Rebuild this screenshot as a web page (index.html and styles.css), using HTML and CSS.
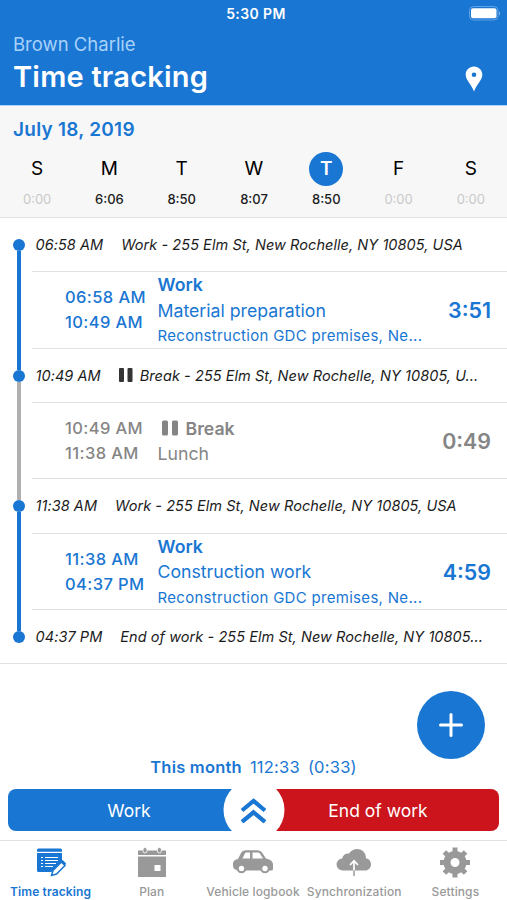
FILE: index.html
```html
<!DOCTYPE html>
<html lang="en">

<head>
    <meta charset="UTF-8">
    <meta name="viewport" content="width=device-width, initial-scale=1.0">
    <title>Time tracking</title>
    <link rel="stylesheet" href="styles.css">
</head>

<body>
    <div class="app">
        <header class="header">
            <div class="status-bar">
                <span></span>
                <span class="clock">5:30 PM</span>
                <svg class="battery" width="32" height="15" viewBox="0 0 32 15">
                    <rect x="0.5" y="0.5" width="28.5" height="13.5" rx="4" fill="none" stroke="#5fa3e6" />
                    <rect x="2" y="2.2" width="25.5" height="10" rx="2" fill="#fff" />
                    <path d="M30 5.2v4.4c1.6-.8 1.6-3.6 0-4.4z" fill="#7fb4ea" />
                </svg>
            </div>
            <div class="user-name"><span>Brown Charlie</span></div>
            <div class="title-row">
                <h1>Time tracking</h1>
                <svg class="pin" width="18" height="26" viewBox="0 0 18 26">
                    <path d="M9 0.4C4.2 0.4 0.7 4 0.7 8.6 0.7 14.5 6.5 18.5 9 25.6 11.5 18.5 17.3 14.5 17.3 8.6 17.3 4 13.8 0.4 9 0.4zM9 6.5a2.3 2.3 0 1 1 0 4.6 2.3 2.3 0 0 1 0-4.6z" fill="#fff" fill-rule="evenodd" />
                </svg>
            </div>
        </header>

        <!-- Week overview -->
        <section class="week">
            <h2><span>July 18, 2019</span></h2>
            <div class="days">
                <div class="day empty"><b>S</b><span>0:00</span></div>
                <div class="day"><b>M</b><span>6:06</span></div>
                <div class="day"><b>T</b><span>8:50</span></div>
                <div class="day"><b>W</b><span>8:07</span></div>
                <div class="day selected"><b>T</b><span>8:50</span></div>
                <div class="day empty"><b>F</b><span>0:00</span></div>
                <div class="day empty"><b>S</b><span>0:00</span></div>
            </div>
        </section>

        <!-- Timeline -->
        <main class="timeline">
            <div class="row event">
                <div class="rail first"><i class="line"></i><i class="dot"></i><i class="line"></i></div>
                <div class="content"><span class="time">06:58 AM</span><span class="place">Work - 255 Elm St, New Rochelle, NY 10805, USA</span></div>
            </div>
            <div class="row entry">
                <div class="rail"><i class="line"></i></div>
                <div class="content">
                    <div class="range"><span>06:58 AM</span><span>10:49 AM</span></div>
                    <div class="details">
                        <strong>Work</strong>
                        <span class="task">Material preparation</span>
                        <span class="project">Reconstruction GDC premises, Ne...</span>
                    </div>
                    <div class="duration">3:51</div>
                </div>
            </div>
            <div class="row event">
                <div class="rail"><i class="line"></i><i class="dot"></i><i class="line gray"></i></div>
                <div class="content">
                    <span class="time">10:49 AM</span>
                    <svg class="pause" width="14" height="14" viewBox="0 0 14 14" fill="#333"><rect width="5" height="14" rx="1" /><rect x="8.5" width="5" height="14" rx="1" /></svg>
                    <span class="place">Break - 255 Elm St, New Rochelle, NY 10805, U...</span>
                </div>
            </div>
            <div class="row entry break">
                <div class="rail"><i class="line gray"></i></div>
                <div class="content">
                    <div class="range"><span>10:49 AM</span><span>11:38 AM</span></div>
                    <div class="details">
                        <strong><svg class="pause" width="17" height="16" viewBox="0 0 17 16" fill="#858585"><rect y="0.5" width="6" height="15" rx="1.5" /><rect x="10" y="0.5" width="6" height="15" rx="1.5" /></svg>Break</strong>
                        <span class="task">Lunch</span>
                    </div>
                    <div class="duration">0:49</div>
                </div>
            </div>
            <div class="row event">
                <div class="rail"><i class="line gray"></i><i class="dot"></i><i class="line"></i></div>
                <div class="content"><span class="time">11:38 AM</span><span class="place">Work - 255 Elm St, New Rochelle, NY 10805, USA</span></div>
            </div>
            <div class="row entry">
                <div class="rail"><i class="line"></i></div>
                <div class="content">
                    <div class="range"><span>11:38 AM</span><span>04:37 PM</span></div>
                    <div class="details">
                        <strong>Work</strong>
                        <span class="task">Construction work</span>
                        <span class="project">Reconstruction GDC premises, Ne...</span>
                    </div>
                    <div class="duration">4:59</div>
                </div>
            </div>
            <div class="row event end">
                <div class="rail last"><i class="line"></i><i class="dot"></i><i class="line"></i></div>
                <div class="content"><span class="time">04:37 PM</span><span class="place">End of work - 255 Elm St, New Rochelle, NY 10805...</span></div>
            </div>
        </main>

        <section class="footer">
            <button class="add-btn">
                <svg width="24" height="24" viewBox="0 0 24 24" stroke="#fff" stroke-width="3" stroke-linecap="round"><path d="M12 1.5v21M1.5 12h21" /></svg>
            </button>
            <div class="summary"><b>This month</b><span>112:33</span><span>(0:33)</span></div>
            <div class="actions">
                <button class="work-btn">Work</button>
                <button class="end-btn">End of work</button>
                <button class="expand-btn">
                    <svg width="26" height="26" viewBox="0 0 26 26" fill="none" stroke="#1976d2" stroke-width="4.2"><path d="M1.5 13L13 3.4 24.5 13M1.5 24.4L13 14.8 24.5 24.4" /></svg>
                </button>
            </div>
        </section>

        <nav class="tabs">
            <a class="tab active">
                <svg width="36" height="32" viewBox="0 0 36 32">
                    <path d="M5.500 1.500h22a1.500 1.500 0 0 1 1.500 1.500v1.800H4V3a1.500 1.500 0 0 1 1.500-1.500zM4 6h25v8.500L18.500 25h-13A1.500 1.500 0 0 1 4 23.500z" fill="currentColor" />
                    <path d="M8 10.500h2M12 10.500h13M8 13.500h2M12 13.500h13M8 16.500h2M12 16.500h11M8 19.500h2M12 19.500h8" stroke="#fff" stroke-width="1.100" />
                    <path d="M18.500 28.500l1.500-5 8.500-8.500 3.500 3.500-8.500 8.500z" fill="#fff" stroke="currentColor" stroke-width="1.500" />
                    <path d="M27.500 14.500l2.200-1.500 3.500 3.500-1.700 2.200z" fill="currentColor" />
                </svg>
                <span>Time tracking</span>
            </a>
            <a class="tab">
                <svg width="30" height="32" viewBox="0 0 30 32">
                    <path d="M1 3.500h28v4.500H1zM1 9.500h28v20.500H1z" fill="currentColor" />
                    <path d="M17.500 18h6v6h-6z" fill="#fff" />
                    <rect x="6" y="0.500" width="4" height="5.500" rx="2" fill="currentColor" stroke="#fff" stroke-width="0.800" />
                    <rect x="20.400" y="0.500" width="4" height="5.500" rx="2" fill="currentColor" stroke="#fff" stroke-width="0.800" />
                </svg>
                <span>Plan</span>
            </a>
            <a class="tab">
                <svg width="42" height="32" viewBox="0 0 42 32">
                    <path d="M1 16.500c0-2.500 2-4 5-4.500L9 6c1.200-2 2.500-2.800 5-2.800h11c2.800 0 4.200 1 5.500 3l3.500 5.300c4.500 1 7 2.500 7 6.500v4c0 1-1 1.500-2 1.500H5.500L2.500 22C1.200 21 1 19.500 1 16.500z" fill="currentColor" />
                    <path d="M10.500 11.500l2.200-4.700c.4-.8 1-1.300 2-1.300H18v6zM20.500 5.500h5c1.200 0 2 .5 2.700 1.500l2.800 4.500H20.500z" fill="#fff" />
                    <circle cx="9.500" cy="21.500" r="4.800" fill="currentColor" /><circle cx="9.500" cy="21.500" r="2.700" fill="#fff" />
                    <circle cx="33" cy="21.500" r="4.800" fill="currentColor" /><circle cx="33" cy="21.500" r="2.700" fill="#fff" />
                </svg>
                <span>Vehicle logbook</span>
            </a>
            <a class="tab">
                <svg width="36" height="32" viewBox="0 0 36 32">
                    <path d="M7 23.500a6 6 0 0 1-.8-12A6 6 0 0 1 13 6.500C15 3.500 18 2 21 2c5.500 0 9 4 9 9.200 3 .6 5 3 5 6 0 3.500-2.500 6.300-6 6.300z" fill="currentColor" />
                    <path d="M18 14.500v9M14 18l4-4.200 4 4.200" fill="none" stroke="#fff" stroke-width="1.700" />
                    <path d="M18 23.500v5.500" stroke="currentColor" stroke-width="1.500" />
                </svg>
                <span>Synchronization</span>
            </a>
            <a class="tab">
                <svg width="32" height="32" viewBox="0 0 32 32">
                    <circle cx="16" cy="15.500" r="8" fill="none" stroke="currentColor" stroke-width="7" />
                    <path d="M16 .5v6M16 24.500v6M1 15.500h6M25 15.500h6M5.400 4.900l4.200 4.200M22.400 21.900l4.200 4.200M5.400 26.100l4.200-4.200M22.400 9.100l4.200-4.200" stroke="currentColor" stroke-width="5" />
                </svg>
                <span>Settings</span>
            </a>
        </nav>
    </div>
</body>

</html>
```

FILE: styles.css
```css
* {
    margin: 0;
    padding: 0;
    box-sizing: border-box;
}

body {
    background-color: #fff;
    color: #1c1c1c;
    font-family: Inter, "Liberation Sans", sans-serif;
}

button {
    border: none;
    font-family: inherit;
    cursor: pointer;
}

svg {
    display: block;
    flex-shrink: 0;
}

.app {
    width: 507px;
    height: 900px;
    display: flex;
    flex-direction: column;
    overflow: hidden;
}

/* Header */
.header {
    height: 106px;
    background-color: #1976d2;
    border-bottom: 1px solid #a5d5fa;
    color: #fff;
}

.status-bar {
    height: 27px;
    padding: 0 6px 0 0;
    display: grid;
    grid-template-columns: 1fr auto 1fr;
    align-items: center;
}

.clock {
    font-size: 14px;
    font-weight: 600;
    letter-spacing: 0.4px;
    padding-left: 11px;
}

.battery {
    justify-self: end;
}

.user-name {
    height: 34px;
    line-height: 35px;
    padding-left: 13px;
    font-size: 18.5px;
    color: #a8d2fa;
}

.title-row {
    display: flex;
    justify-content: space-between;
    align-items: center;
    height: 32px;
    padding: 0 24px 0 13px;
}

.title-row h1 {
    font-size: 29px;
    font-weight: 600;
    line-height: 32px;
    letter-spacing: 0.22px;
}

.pin {
    margin-top: 3px;
}

/* Week overview */
.week {
    height: 112px;
    background-color: #f7f7f7;
    border-bottom: 1px solid #e2e2e2;
}

.week h2 {
    height: 46px;
    line-height: 48px;
    padding-left: 13px;
    font-size: 19px;
    font-weight: 600;
    letter-spacing: 0.25px;
    color: #1976d2;
}

.days {
    display: grid;
    grid-template-columns: repeat(7, 1fr);
    padding-left: 1px;
}

.day {
    display: flex;
    flex-direction: column;
    align-items: center;
    font-size: 13px;
    font-weight: 500;
}

.day b {
    width: 34px;
    height: 34px;
    line-height: 34px;
    border-radius: 50%;
    text-align: center;
    font-size: 19px;
    font-weight: 400;
    color: #000;
}

.day span {
    line-height: 26px;
}

.day.empty span {
    color: #c9c9c9;
    font-weight: 400;
}

.day.selected b {
    background-color: #1976d2;
    color: #fff;
    font-weight: 600;
}

/* Timeline */
.row {
    display: flex;
}

.event {
    height: 54.2px;
}

.entry {
    height: 76.5px;
}

.rail {
    width: 32px;
    padding-left: 6px;
    display: flex;
    flex-direction: column;
    align-items: center;
}

.line {
    flex: 1;
    width: 4px;
    background-color: #1976d2;
}

.line.gray {
    background-color: #b0b0b0;
}

.dot {
    width: 12px;
    height: 12px;
    border-radius: 50%;
    background-color: #1976d2;
}

.first .line:first-child,
.last .line:last-child {
    background-color: transparent;
}

.content {
    flex: 1;
    display: flex;
    align-items: center;
    border-bottom: 1px solid #e2e2e2;
    white-space: nowrap;
}

.event .content {
    padding-left: 3.5px;
    font-size: 14.5px;
    font-style: italic;
    letter-spacing: 0.06px;
}

.event .time {
    margin-right: 18px;
}

.event .pause {
    margin-right: 7px;
}

.event.end {
    border-bottom: 1px solid #e2e2e2;
}

.event.end .content {
    border-bottom: none;
}

.entry .content {
    padding: 1px 16px 0 33px;
    color: #1976d2;
}

.range {
    width: 92.5px;
    display: flex;
    flex-direction: column;
    font-size: 16.5px;
    font-weight: 500;
    line-height: 25px;
    letter-spacing: 0.4px;
}

.details {
    flex: 1;
    display: flex;
    flex-direction: column;
    line-height: 25.5px;
    font-size: 17.7px;
}

.details strong {
    display: flex;
    align-items: center;
    font-weight: 600;
}

.details .pause {
    margin: 0 7px 0 4px;
}

.details .project {
    font-size: 15px;
    letter-spacing: 0.3px;
}

.duration {
    font-size: 21.4px;
    font-weight: 600;
}

.break .content {
    color: #858585;
}

/* Footer */
.footer {
    flex: 1;
    padding: 27px 8px 0;
    display: flex;
    flex-direction: column;
}

.add-btn {
    width: 68px;
    height: 68px;
    margin-right: 14.5px;
    align-self: flex-end;
    display: flex;
    justify-content: center;
    align-items: center;
    border-radius: 50%;
    background-color: #1976d2;
}

.summary {
    height: 30px;
    line-height: 17px;
    display: flex;
    justify-content: center;
    gap: 8px;
    font-size: 16.5px;
    letter-spacing: 0.22px;
    color: #1976d2;
}

.summary b {
    font-weight: 600;
}

.actions {
    position: relative;
    height: 42px;
    display: flex;
    border-radius: 8px;
    overflow: hidden;
}

.work-btn,
.end-btn {
    flex: 1;
    color: #fff;
    font-size: 17.5px;
}

.work-btn {
    background-color: #1976d2;
    padding-right: 3px;
}

.end-btn {
    background-color: #cb141c;
    padding-left: 4px;
}

.expand-btn {
    position: absolute;
    left: 50%;
    top: 50%;
    width: 61px;
    height: 61px;
    transform: translate(-50%, -50%);
    display: flex;
    justify-content: center;
    align-items: center;
    border-radius: 50%;
    background-color: #fff;
}

/* Tabs */
.tabs {
    height: 60px;
    padding: 6px 1px 0 0;
    display: grid;
    grid-template-columns: repeat(5, 1fr);
    border-top: 1px solid #e2e2e2;
}

.tab {
    display: flex;
    flex-direction: column;
    align-items: center;
    font-size: 12px;
    font-weight: 500;
    letter-spacing: 0.12px;
    color: #999;
    white-space: nowrap;
}

.tab span {
    line-height: 26px;
}

.tab.active {
    color: #1976d2;
    font-weight: 600;
}
```
